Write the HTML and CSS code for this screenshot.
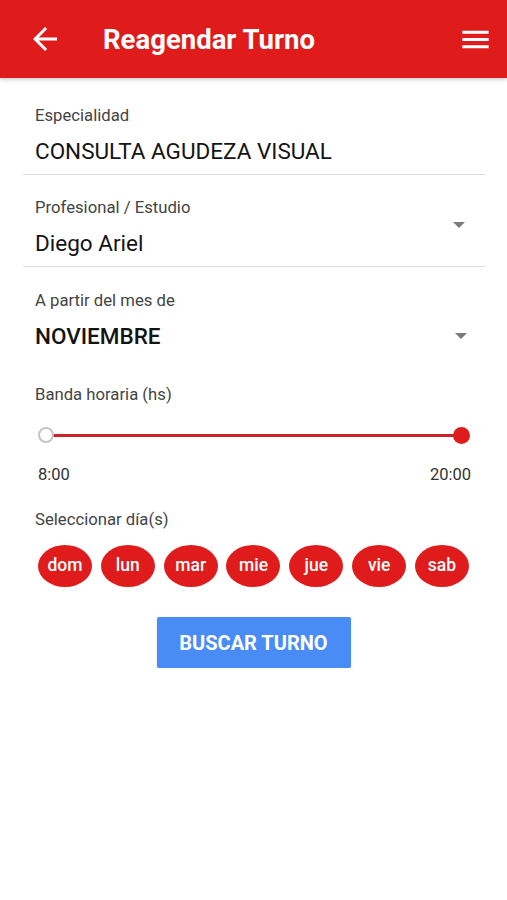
FILE: index.html
```html
<!DOCTYPE html>
<html lang="es">
<head>
  <meta charset="UTF-8">
  <meta name="viewport" content="width=device-width, initial-scale=1.0">
  <title>Reagendar Turno</title>
<link rel="stylesheet" href="styles.css">
</head>
<body>

<div class="toolbar">
  <svg class="back_icon" viewBox="0 0 24 24"><path d="M20 11H7.83l5.59-5.59L12 4l-8 8 8 8 1.41-1.41L7.83 13H20v-2z"/></svg>
  <h1>Reagendar Turno</h1>
  <svg class="menu_icon" viewBox="0 0 24 24"><path d="M3 18h18v-2H3v2zm0-5h18v-2H3v2zm0-7v2h18V6H3z"/></svg>
</div>

<div class="main">

  <div class="field">
    <div class="field_body">
      <p class="label">Especialidad</p>
      <p class="value">CONSULTA AGUDEZA VISUAL</p>
    </div>
  </div>

  <div class="field">
    <div class="field_body">
      <p class="label">Profesional / Estudio</p>
      <p class="value">Diego Ariel</p>
    </div>
    <span class="drop_arrow"></span>
  </div>

  <div class="field no_line">
    <div class="field_body">
      <p class="label">A partir del mes de</p>
      <div class="value_row">
        <p class="value month">NOVIEMBRE</p>
        <span class="drop_arrow"></span>
      </div>
    </div>
  </div>

  <div class="section">
    <p class="label">Banda horaria (hs)</p>
    <div class="slider">
      <span class="thumb thumb_min"></span>
      <span class="thumb thumb_max"></span>
    </div>
    <div class="range_labels">
      <span>8:00</span>
      <span>20:00</span>
    </div>
  </div>

  <div class="section">
    <p class="label">Seleccionar día(s)</p>
  </div>
  <div class="days">
    <span class="day">dom</span>
    <span class="day">lun</span>
    <span class="day">mar</span>
    <span class="day">mie</span>
    <span class="day">jue</span>
    <span class="day">vie</span>
    <span class="day">sab</span>
  </div>

  <div class="actions">
    <button class="search_btn">BUSCAR TURNO</button>
  </div>

</div>

</body>
</html>
```

FILE: styles.css
```css
*{
    padding: 0;
    margin: 0;
    box-sizing: border-box;
    font-family: 'Roboto', 'Noto Sans', sans-serif;
}
body{
    background: #ffffff;
    color: #111111;
}

/* top bar */
.toolbar{
    height: 78px;
    background: #e01b1b;
    display: flex;
    align-items: center;
    padding: 0 14px 0 27px;
    box-shadow: 0 2px 4px rgba(0,0,0,0.18);
}
.back_icon{
    width: 36px;
    height: 36px;
    fill: #ffffff;
}
.toolbar h1{
    flex: 1;
    margin-left: 40px;
    color: #ffffff;
    font-size: 27.5px;
    font-weight: 700;
}
.menu_icon{
    width: 35px;
    height: 35px;
    fill: #ffffff;
}

.main{
    padding-top: 5px;
}

/* form fields */
.field{
    margin: 0 22px 0 23px;
    padding: 23px 20px 8px 12px;
    border-bottom: 1px solid #dcdcdc;
    display: flex;
    align-items: center;
}
.field.no_line{
    border-bottom: none;
    padding-top: 24px;
}
.field_body{
    flex: 1;
}
.label{
    font-size: 16.7px;
    line-height: 20px;
    color: #444444;
}
.value{
    margin-top: 10px;
    font-size: 22.5px;
    line-height: 30px;
    color: #141414;
}
.value.month{
    font-weight: 500;
    margin-top: 0;
}
.value_row{
    margin-top: 10px;
    display: flex;
    align-items: center;
    justify-content: space-between;
}
.drop_arrow{
    width: 0;
    height: 0;
    border-left: 6.5px solid transparent;
    border-right: 6.5px solid transparent;
    border-top: 6px solid #7b7b7b;
    margin-bottom: 6px;
}
.value_row .drop_arrow{
    margin: 0 -2px 0 0;
}

/* time range */
.section{
    padding: 26px 35px 0 35px;
}
.slider{
    position: relative;
    height: 3px;
    margin: 29px 10px 0 11px;
    background: #c8262c;
}
.thumb{
    position: absolute;
    top: -7px;
    width: 16px;
    height: 16px;
    border-radius: 50%;
}
.thumb_min{
    left: -8px;
    background: #ffffff;
    border: 2px solid #c4c4c4;
}
.thumb_max{
    right: -8px;
    top: -7.5px;
    width: 17px;
    height: 17px;
    background: #e01b1b;
}
.range_labels{
    display: flex;
    justify-content: space-between;
    margin: 28px 1px 0 3px;
    font-size: 16.5px;
    line-height: 20px;
    color: #333333;
}
.section + .section{
    padding-top: 25px;
}

/* day pills */
.days{
    display: flex;
    justify-content: space-between;
    padding: 0 38px;
    margin-top: 15px;
}
.day{
    width: 54px;
    height: 42px;
    border-radius: 50%;
    background: #e01b1b;
    color: #ffffff;
    font-size: 17.5px;
    font-weight: 500;
    display: flex;
    align-items: center;
    justify-content: center;
    padding-bottom: 2px;
}

.actions{
    display: flex;
    justify-content: center;
    margin-top: 30px;
}
.search_btn{
    width: 194px;
    height: 51px;
    border: none;
    border-radius: 2px;
    background: #4a8cf5;
    color: #ffffff;
    font-size: 20px;
    font-weight: 700;
    box-shadow: 0 1px 2px rgba(0,0,0,0.2);
    cursor: pointer;
}
```
